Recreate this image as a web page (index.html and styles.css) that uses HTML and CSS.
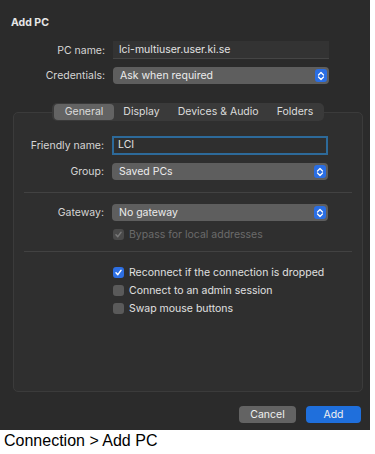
FILE: index.html
```html
<!DOCTYPE html>
<html>
<head>
<meta charset="utf-8">
<link rel="stylesheet" href="styles.css">
</head>
<body>
<div class="dialog">
  <div class="title">Add PC</div>
  <div class="row row-first">
    <label class="lbl">PC name:</label>
    <div class="field">lci-multiuser.user.ki.se</div>
  </div>
  <div class="row row-cred">
    <label class="lbl">Credentials:</label>
    <div class="popup"><span>Ask when required</span><span class="stepper"><svg width="8" height="10" viewBox="0 0 8 10"><path d="M1.5 4 L4 1.5 L6.5 4 M1.5 6 L4 8.5 L6.5 6" fill="none" stroke="#fff" stroke-width="1.3" stroke-linecap="round" stroke-linejoin="round"/></svg></span></div>
  </div>
  <div class="tabwrap">
    <div class="tabs">
      <span class="tab active">General</span>
      <span class="tab">Display</span>
      <span class="tab">Devices &amp; Audio</span>
      <span class="tab">Folders</span>
    </div>
    <div class="box">
      <div class="brow brow-first">
        <label class="lbl">Friendly name:</label>
        <div class="field focus">LCI</div>
      </div>
      <div class="brow brow-group">
        <label class="lbl">Group:</label>
        <div class="popup"><span>Saved PCs</span><span class="stepper"><svg width="8" height="10" viewBox="0 0 8 10"><path d="M1.5 4 L4 1.5 L6.5 4 M1.5 6 L4 8.5 L6.5 6" fill="none" stroke="#fff" stroke-width="1.3" stroke-linecap="round" stroke-linejoin="round"/></svg></span></div>
      </div>
      <div class="sep sep1"></div>
      <div class="brow brow-gw">
        <label class="lbl">Gateway:</label>
        <div class="popup"><span>No gateway</span><span class="stepper"><svg width="8" height="10" viewBox="0 0 8 10"><path d="M1.5 4 L4 1.5 L6.5 4 M1.5 6 L4 8.5 L6.5 6" fill="none" stroke="#fff" stroke-width="1.3" stroke-linecap="round" stroke-linejoin="round"/></svg></span></div>
      </div>
      <div class="check disabled bypass"><span class="cb on-dis"><svg width="9" height="9" viewBox="0 0 9 9"><path d="M2 4.8 L3.8 6.6 L7 2.4" fill="none" stroke="#7a7a7a" stroke-width="1.5" stroke-linecap="round" stroke-linejoin="round"/></svg></span>Bypass for local addresses</div>
      <div class="sep sep2"></div>
      <div class="check first"><span class="cb on"><svg width="9" height="9" viewBox="0 0 9 9"><path d="M2 4.8 L3.8 6.6 L7 2.4" fill="none" stroke="#fff" stroke-width="1.5" stroke-linecap="round" stroke-linejoin="round"/></svg></span>Reconnect if the connection is dropped</div>
      <div class="check"><span class="cb"></span>Connect to an admin session</div>
      <div class="check"><span class="cb"></span>Swap mouse buttons</div>
    </div>
  </div>
  <div class="buttons">
    <span class="btn cancel">Cancel</span>
    <span class="btn add">Add</span>
  </div>
</div>
<div class="caption">Connection &gt; Add PC</div>
</body>
</html>
```
FILE: styles.css
```css
* { box-sizing: border-box; }
body {
  margin: 0;
  background: #ffffff;
  font-family: Inter, "Liberation Sans", sans-serif;
}
.dialog {
  width: 370px;
  height: 430px;
  background: #2b2b2b;
  color: #dedede;
  font-size: 10.5px;
  padding-top: 16px;
  display: flex;
  flex-direction: column;
}
.title {
  font-weight: 700;
  font-size: 10.5px;
  padding-left: 11px;
  line-height: 14px;
  color: #e6e6e6;
}
.row {
  display: grid;
  grid-template-columns: 105px 216px;
  column-gap: 8px;
  align-items: center;
}
.row-first { margin-top: 11px; }
.row-cred { margin-top: 8px; }
.lbl {
  text-align: right;
  color: #d6d6d6;
  white-space: nowrap;
}
.field {
  height: 18px;
  line-height: 17px;
  background: #333333;
  border-bottom: 1px solid #454545;
  padding-left: 6px;
  color: #e2e2e2;
}
.field.focus {
  border: 2px solid #2d6a9a;
  background: #2f2f2f;
  line-height: 14px;
  padding-left: 4px;
  height: 19px;
}
.popup {
  height: 17px;
  background: #5e5e5e;
  border-radius: 4px;
  display: flex;
  align-items: center;
  justify-content: space-between;
  padding-left: 7px;
  padding-right: 2px;
  color: #ececec;
}
.stepper {
  width: 12px;
  height: 13px;
  background: #2a6ee4;
  border-radius: 3px;
  display: flex;
  align-items: center;
  justify-content: center;
}
.tabwrap {
  margin-top: 19px;
  margin-left: 13px;
  width: 350px;
  display: flex;
  flex-direction: column;
  align-items: center;
}
.tabs {
  display: flex;
  background: #3a3a3a;
  border-radius: 5px;
  height: 18px;
  align-items: center;
  padding: 0 2px;
  position: relative;
  z-index: 1;
}
.tab {
  padding: 0 9px;
  height: 16px;
  line-height: 16px;
  color: #dcdcdc;
  border-radius: 4px;
}
.tab.active {
  background: #636363;
  padding: 0 11px;
}
.box {
  width: 350px;
  height: 280px;
  margin-top: -9px;
  border: 1px solid #3b3b3b;
  background: #2f2f2f;
  border-radius: 5px;
  display: flex;
  flex-direction: column;
}
.brow {
  display: grid;
  grid-template-columns: 90px 216px;
  column-gap: 8px;
  align-items: center;
}
.brow-first { margin-top: 23px; }
.brow-group { margin-top: 8px; }
.brow-gw { margin-top: 0; }
.sep {
  height: 1px;
  background: #424242;
  margin-left: 10px;
  margin-right: 10px;
}
.sep1 { margin-top: 12px; margin-bottom: 11px; }
.sep2 { margin-top: 8px; margin-bottom: 11px; }
.check {
  display: flex;
  align-items: center;
  margin-left: 99px;
  height: 18px;
  color: #e0e0e0;
}
.check.bypass { margin-top: 4px; color: #6b6b6b; }
.cb {
  width: 11px;
  height: 11px;
  border-radius: 3px;
  background: #5a5a5a;
  margin-right: 5px;
  display: flex;
  align-items: center;
  justify-content: center;
}
.cb.on { background: #2d6fe3; }
.cb.on-dis { background: #4a4a4a; }
.buttons {
  margin-top: 14px;
  display: flex;
  justify-content: flex-end;
  gap: 10px;
  padding-right: 9px;
}
.btn {
  height: 17px;
  line-height: 17px;
  border-radius: 4px;
  text-align: center;
  color: #f0f0f0;
}
.cancel { width: 57px; background: #636363; }
.add { width: 55px; background: #1f6fdc; }
.caption {
  font-family: "Liberation Sans", Arial, sans-serif;
  font-size: 16px;
  color: #000;
  padding-left: 4px;
  line-height: 18px;
  margin-top: 2px;
}
```
